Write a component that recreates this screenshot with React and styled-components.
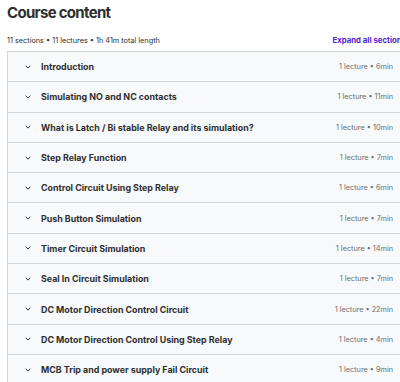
import styled, { createGlobalStyle } from "styled-components";

const sections = [
  { title: "Introduction", meta: "1 lecture • 6min" },
  { title: "Simulating NO and NC contacts", meta: "1 lecture • 11min" },
  { title: "What is Latch / Bi stable Relay and its simulation?", meta: "1 lecture • 10min" },
  { title: "Step Relay Function", meta: "1 lecture • 7min" },
  { title: "Control Circuit Using Step Relay", meta: "1 lecture • 6min" },
  { title: "Push Button Simulation", meta: "1 lecture • 7min" },
  { title: "Timer Circuit Simulation", meta: "1 lecture • 14min" },
  { title: "Seal In Circuit Simulation", meta: "1 lecture • 7min" },
  { title: "DC Motor Direction Control Circuit", meta: "1 lecture • 22min" },
  { title: "DC Motor Direction Control Using Step Relay", meta: "1 lecture • 4min" },
  { title: "MCB Trip and power supply Fail Circuit", meta: "1 lecture • 9min" },
];

const GlobalStyle = createGlobalStyle`
  body {
    margin: 0;
    background: #fff;
    font-family: Inter, "Noto Sans", sans-serif;
    color: #2d2f31;
  }
  #root {
    width: 400px;
    height: 382px;
    overflow: hidden;
  }
`;

const Page = styled.div`
  box-sizing: border-box;
  padding: 4px 0 0 7px;
  width: 420px;
`;

const Title = styled.h2`
  margin: 0;
  font-size: 15px;
  font-weight: 700;
  letter-spacing: -0.7px;
  line-height: 18px;
`;

const Summary = styled.div`
  display: flex;
  justify-content: space-between;
  align-items: center;
  margin-top: 11px;
  height: 14px;
  padding-right: 14px;
  font-size: 7.3px;
  color: #2d2f31;
`;

const Expand = styled.span`
  color: #5624d0;
  font-weight: 700;
  font-size: 7.8px;
  white-space: nowrap;
`;

const Panel = styled.div`
  margin-top: 4px;
  border-left: 1px solid #d1d7dc;
  border-top: 1px solid #d1d7dc;
`;

const Row = styled.div`
  display: flex;
  align-items: center;
  height: 29.3px;
  background: #f7f9fa;
  border-bottom: 1px solid #d1d7dc;
  padding: 0 27px 0 17px;
`;

const Chevron = styled.svg`
  width: 6px;
  height: 4px;
  flex: none;
  margin-right: 10px;
`;

const SectionTitle = styled.span`
  flex: 1;
  font-size: 8.9px;
  font-weight: 700;
  white-space: nowrap;
`;

const Meta = styled.span`
  font-size: 7.3px;
  color: #6a6f73;
  white-space: nowrap;
`;

export default function App() {
  return (
    <Page>
      <GlobalStyle />
      <Title>Course content</Title>
      <Summary>
        <span>11 sections • 11 lectures • 1h 41m total length</span>
        <Expand>Expand all sections</Expand>
      </Summary>
      <Panel>
        {sections.map((s) => (
          <Row key={s.title}>
            <Chevron viewBox="0 0 6 4">
              <path d="M0.7 0.7 L3 3.1 L5.3 0.7" fill="none" stroke="#2d2f31" strokeWidth="1" />
            </Chevron>
            <SectionTitle>{s.title}</SectionTitle>
            <Meta>{s.meta}</Meta>
          </Row>
        ))}
      </Panel>
    </Page>
  );
}
